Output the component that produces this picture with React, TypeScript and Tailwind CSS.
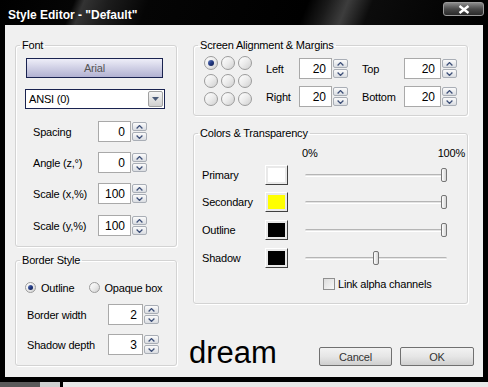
import React from "react";

const ui = "font-['Liberation_Sans',Arial,sans-serif] text-[11px] tracking-[-0.2px] leading-[14px] text-black";

// Petits boutons du spinner (haut / bas)
function SpinBtn({ up }: { up?: boolean }) {
  return (
    <div className="flex flex-1 items-center justify-center rounded-[2px] border border-[#a9aeb6] bg-gradient-to-b from-[#fbfbfb] to-[#dadde2]">
      <svg width="7" height="4" viewBox="0 0 7 4">
        <path
          d={up ? "M0.6 3.5 3.5 0.6 6.4 3.5" : "M0.6 0.5 3.5 3.4 6.4 0.5"}
          stroke="#3d4f78"
          strokeWidth="1.3"
          fill="none"
        />
      </svg>
    </div>
  );
}

function Spin({ value, w }: { value: string; w: string }) {
  return (
    <div className="flex h-[21px]">
      <div className={`flex items-center justify-end border border-[#a9a9a9] bg-white pr-[5px] text-[12px] tracking-normal ${w}`}>
        {value}
      </div>
      <div className="ml-[1px] flex w-[15px] flex-col gap-[1px] py-[1px]">
        <SpinBtn up />
        <SpinBtn />
      </div>
    </div>
  );
}

function Group({ title, className, children }: { title: string; className: string; children: React.ReactNode }) {
  return (
    <fieldset
      className={`rounded-[3px] border border-[#d3d3d3] shadow-[inset_1px_1px_0_#fff,1px_1px_0_#fff] ${className}`}
    >
      <legend className="ml-[4px] px-[2px]">{title}</legend>
      {children}
    </fieldset>
  );
}

function Radio({ checked, size }: { checked?: boolean; size: string }) {
  return (
    <div
      className={`flex items-center justify-center rounded-full border border-[#9c9c9c] bg-gradient-to-br from-[#ffffff] via-[#ececec] to-[#cfcfcf] ${size}`}
    >
      {checked && (
        <div className="h-[55%] w-[55%] rounded-full bg-gradient-to-br from-[#6d83c0] via-[#233a84] to-[#0e1c4a]" />
      )}
    </div>
  );
}

function SpinRow({ label, value, lw, iw }: { label: string; value: string; lw: string; iw: string }) {
  return (
    <div className="flex items-center">
      <div className={lw}>{label}</div>
      <Spin value={value} w={iw} />
    </div>
  );
}

function Swatch({ color }: { color: string }) {
  return (
    <div className="h-[20px] w-[23px] border border-b-[#404040] border-l-[#ffffff] border-r-[#404040] border-t-[#ffffff] bg-[#e9e9e9] p-[2px]">
      <div className={`h-full w-full ${color}`} />
    </div>
  );
}

function Slider({ pos }: { pos: string }) {
  return (
    <div className="relative ml-[17px] h-[14px] w-[142px]">
      <div className="absolute left-0 right-0 top-[6px] h-[3px] rounded-full border-b border-t border-b-white border-t-[#b5b5b5] bg-[#e4e4e4]" />
      <div
        className={`absolute top-0 h-[14px] w-[6px] rounded-[2px] border border-[#767676] bg-gradient-to-r from-[#ffffff] to-[#d4d4d4] ${pos}`}
      />
    </div>
  );
}

function ColorRow({ label, color, pos, className }: { label: string; color: string; pos: string; className: string }) {
  return (
    <div className={`flex items-center ${className}`}>
      <div className="ml-[8px] w-[63px]">{label}</div>
      <Swatch color={color} />
      <Slider pos={pos} />
    </div>
  );
}

function Button({ label, w }: { label: string; w: string }) {
  return (
    <div
      className={`flex h-[19px] items-center justify-center rounded-[2px] border border-[#707070] bg-gradient-to-b from-[#f2f2f2] via-[#e6e6e6] to-[#cfcfcf] text-[#333] ${w}`}
    >
      {label}
    </div>
  );
}

export default function App() {
  return (
    <div className={`flex h-[387px] w-[488px] flex-col overflow-hidden bg-black ${ui}`}>
      {/* Barre de titre */}
      <div className="flex h-[25px] items-start bg-[linear-gradient(112deg,#000_0%,#050505_15%,#333_17%,#1c1c1c_22%,#050505_30%,#000_62%,#1a1a1a_66%,#3d3d3d_70%,#0c0c0c_75%,#000_100%)]">
        <div className="ml-[8px] mt-[8px] text-[12px] font-bold leading-[15px] tracking-normal text-white">
          Style Editor - "Default"
        </div>
        <div className="ml-auto mr-[4px] mt-[2px] flex h-[14px] w-[41px] items-center justify-center rounded-[3px] border border-[#9a9a9a] bg-gradient-to-b from-[#8a8a8a] via-[#4a4a4a] to-[#2a2a2a]">
          <svg width="12" height="9" viewBox="0 0 12 9">
            <path d="M1.5 1 10.5 8M10.5 1 1.5 8" stroke="#fff" strokeWidth="2.4" />
          </svg>
        </div>
      </div>

      {/* Zone client */}
      <div className="mx-[5px] flex h-[352px] bg-[#f0f0f0] pt-[13px]">
        {/* Colonne gauche */}
        <div className="ml-[10px] flex w-[162px] flex-col">
          <Group title="Font" className="h-[209px]">
            <div className="ml-[10px] mt-[6px] flex h-[20px] w-[137px] items-center justify-center border border-[#1a2350] bg-gradient-to-b from-[#eeeef8] to-[#b2b2d2] text-[#555]">
              Arial
            </div>
            <div className="ml-[9px] mt-[11px] flex h-[20px] w-[140px] items-center border border-[#1a2350] bg-white pl-[3px]">
              <span>ANSI (0)</span>
              <div className="ml-auto mr-[1px] flex h-[16px] w-[15px] items-center justify-center rounded-[2px] border border-[#a0a0a0] bg-gradient-to-b from-[#f6f6f6] to-[#d0d0d0]">
                <svg width="7" height="4" viewBox="0 0 7 4">
                  <path d="M0 0h7L3.5 4z" fill="#4a5a78" />
                </svg>
              </div>
            </div>
            <div className="ml-[17px] mt-[12px] flex flex-col gap-[10px]">
              <SpinRow label="Spacing" value="0" lw="w-[65px]" iw="w-[33px]" />
              <SpinRow label="Angle (z,°)" value="0" lw="w-[65px]" iw="w-[33px]" />
              <SpinRow label="Scale (x,%)" value="100" lw="w-[65px]" iw="w-[33px]" />
              <div className="mt-[1px]">
                <SpinRow label="Scale (y,%)" value="100" lw="w-[65px]" iw="w-[33px]" />
              </div>
            </div>
          </Group>

          <Group title="Border Style" className="mt-[6px] h-[113px]">
            <div className="ml-[9px] mt-[15px] flex h-[11px] items-center">
              <Radio checked size="h-[11px] w-[11px]" />
              <span className="ml-[5px]">Outline</span>
              <div className="ml-[15px]">
                <Radio size="h-[11px] w-[11px]" />
              </div>
              <span className="ml-[4px]">Opaque box</span>
            </div>
            <div className="ml-[11px] mt-[11px] flex flex-col gap-[9px]">
              <SpinRow label="Border width" value="2" lw="w-[81px]" iw="w-[35px]" />
              <SpinRow label="Shadow depth" value="3" lw="w-[81px]" iw="w-[35px]" />
            </div>
          </Group>
        </div>

        {/* Colonne droite */}
        <div className="ml-[16px] flex w-[282px] flex-col">
          <Group title="Screen Alignment & Margins" className="h-[78px] w-[275px]">
            <div className="flex">
              <div className="ml-[10px] mt-[4px] grid grid-cols-3 gap-[3px]">
                <Radio checked size="h-[14px] w-[14px]" />
                {Array.from({ length: 8 }).map((_, i) => (
                  <Radio key={i} size="h-[14px] w-[14px]" />
                ))}
              </div>
              <div className="ml-[14px] mt-[6px] flex flex-col gap-[7px]">
                <div className="flex items-center">
                  <SpinRow label="Left" value="20" lw="w-[33px]" iw="w-[33px]" />
                  <div className="ml-[14px]">
                    <SpinRow label="Top" value="20" lw="w-[42px]" iw="w-[37px]" />
                  </div>
                </div>
                <div className="flex items-center">
                  <SpinRow label="Right" value="20" lw="w-[33px]" iw="w-[33px]" />
                  <div className="ml-[14px]">
                    <SpinRow label="Bottom" value="20" lw="w-[42px]" iw="w-[37px]" />
                  </div>
                </div>
              </div>
            </div>
          </Group>

          <Group title="Colors & Transparency" className="mt-[10px] h-[178px] w-[275px]">
            <div className="ml-[108px] mr-[2px] mt-[6px] flex justify-between">
              <span>0%</span>
              <span>100%</span>
            </div>
            <ColorRow className="mt-[5px]" label="Primary" color="bg-white" pos="right-0" />
            <ColorRow className="mt-[7px]" label="Secondary" color="bg-[#ffff00]" pos="right-0" />
            <ColorRow className="mt-[8px]" label="Outline" color="bg-black" pos="right-0" />
            <ColorRow className="mt-[8px]" label="Shadow" color="bg-black" pos="left-[68px]" />
            <div className="ml-[129px] mt-[9px] flex items-center">
              <div className="h-[12px] w-[12px] border border-[#8f8f8f] bg-gradient-to-br from-[#dcdcdc] to-[#f8f8f8]" />
              <span className="ml-[3px]">Link alpha channels</span>
            </div>
          </Group>

          <div className="mt-[34px] flex items-start">
            <div className="-ml-[4px] text-[31px] leading-[30px] tracking-normal">dream</div>
            <div className="ml-auto mr-[1px] mt-[9px] flex gap-[8px]">
              <Button label="Cancel" w="w-[73px]" />
              <Button label="OK" w="w-[74px]" />
            </div>
          </div>
        </div>
      </div>

      <div className="h-[5px]" />
      <div className="flex h-[5px]">
        <div className="w-[40px] bg-[#5a5a5a]" />
        <div className="w-[20px] bg-[#cfcfcf]" />
        <div className="w-[3px] bg-black" />
        <div className="flex-1 bg-[#e8e8e8]" />
      </div>
    </div>
  );
}
